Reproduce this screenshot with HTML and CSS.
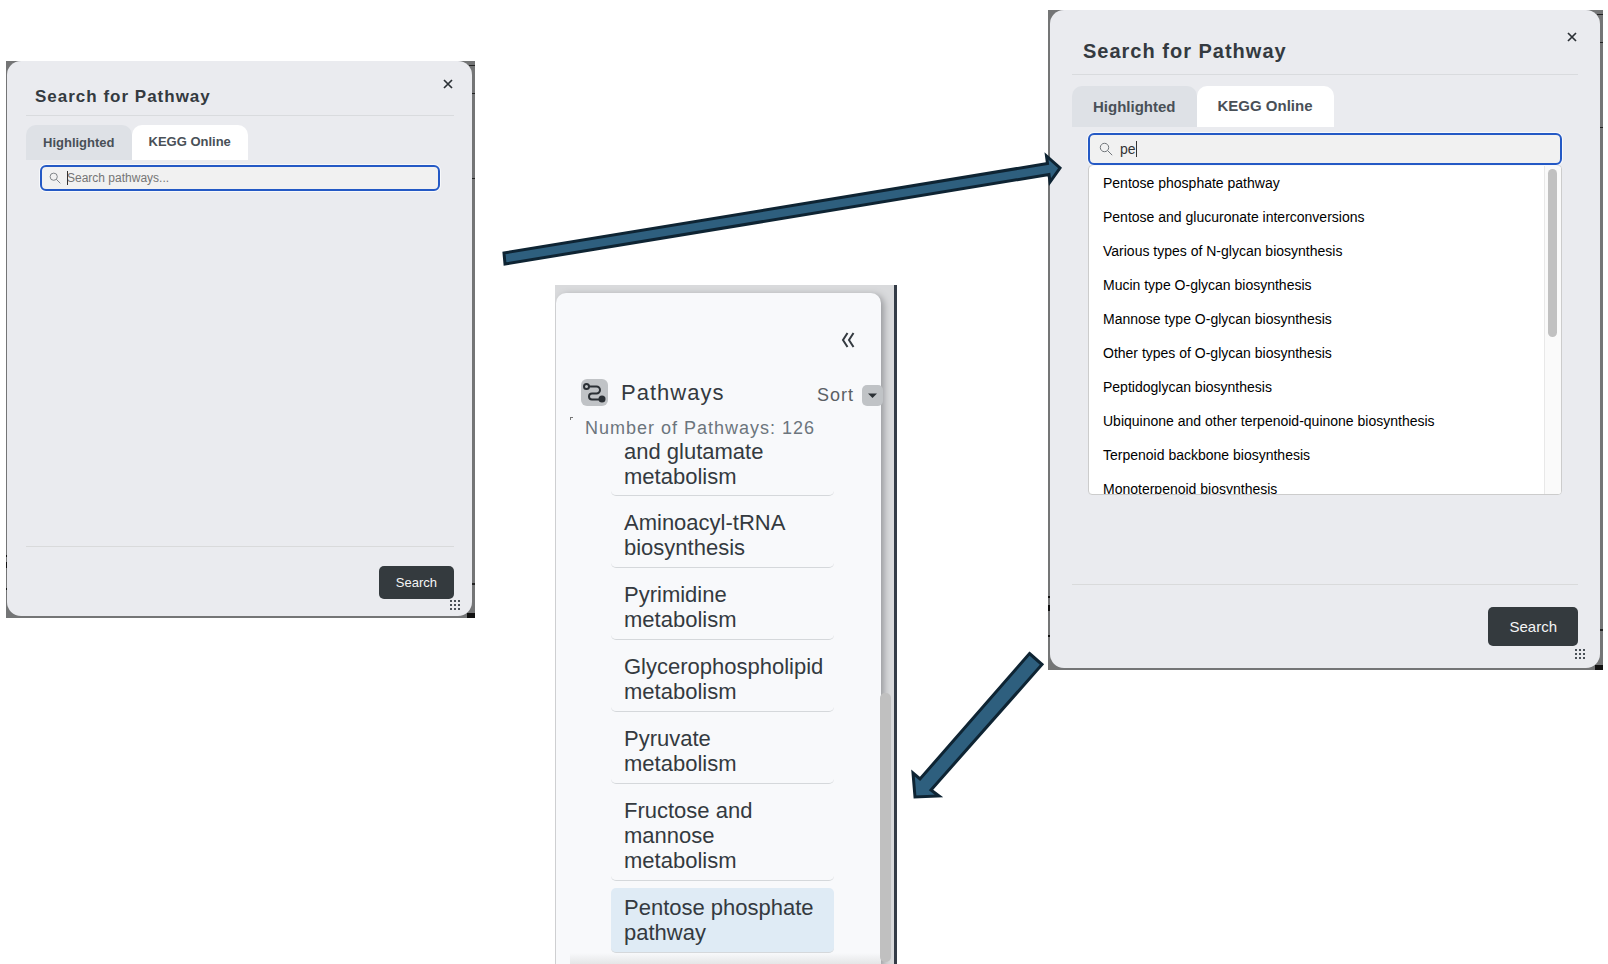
FILE: index.html
```html
<!DOCTYPE html>
<html lang="en">
<head>
<meta charset="utf-8">
<title>Search for Pathway</title>
<link rel="stylesheet" href="styles.css">
</head>
<body>
<main class="board">
  <section class="shot shot-small">
    <div class="dialog">
      <header class="dialog-head">
        <h2 class="dialog-title">Search for Pathway</h2>
        <button class="close" type="button" aria-label="Close"><svg viewBox="0 0 12 12"><path d="M2 2l8 8M10 2l-8 8"/></svg></button>
      </header>
      <div class="dialog-body">
        <div class="tabs">
          <button class="tab" type="button">Highlighted</button>
          <button class="tab tab-active" type="button">KEGG Online</button>
        </div>
        <div class="field">
          <svg class="lens" viewBox="0 0 14 14"><circle cx="5.5" cy="5.5" r="4.2"/><path d="M8.6 8.6l4.6 4.6"/></svg>
          <input class="field-input" type="text" aria-label="Search pathways" placeholder="Search pathways...">
          <span class="caret"></span>
        </div>
      </div>
      <footer class="dialog-foot">
        <button class="submit" type="button">Search</button>
        <svg class="grip" viewBox="0 0 12 12"><path d="M1 2h10M1 6h10M1 10h10"/></svg>
      </footer>
    </div>
  </section>

  <section class="sidebar">
    <div class="card">
      <div class="card-top">
        <button class="collapse" type="button" aria-label="Collapse"><svg viewBox="0 0 14 16"><path d="M6.5 1L2 8l4.500 7M12.500 1L8 8l4.500 7"/></svg></button>
      </div>
      <header class="card-head">
        <svg class="route" viewBox="0 0 27 27"><rect width="27" height="27" rx="6"/><path d="M8 7.500h7.500a3.500 3.500 0 0 1 0 7H11a3 3 0 0 0 0 6h8"/><circle class="ring" cx="5.500" cy="7.500" r="2.500"/><circle class="dot" cx="21" cy="20" r="3.500"/></svg>
        <h2 class="card-title">Pathways</h2>
        <span class="sort">Sort</span>
        <button class="sort-button" type="button" aria-label="Sort options"><svg viewBox="0 0 21 21"><path d="M6 8.500h9L10.500 13z"/></svg></button>
      </header>
      <p class="count">Number of Pathways: 126</p>
      <ul class="items">
        <li class="item item-cut">and glutamate metabolism</li>
        <li class="item">Aminoacyl-tRNA biosynthesis</li>
        <li class="item">Pyrimidine metabolism</li>
        <li class="item">Glycerophospholipid metabolism</li>
        <li class="item">Pyruvate metabolism</li>
        <li class="item">Fructose and mannose metabolism</li>
        <li class="item item-active">Pentose phosphate pathway</li>
      </ul>
      <div class="fade"></div>
    </div>
    <div class="side-thumb"></div>
  </section>

  <section class="shot shot-large">
    <div class="dialog">
      <header class="dialog-head">
        <h2 class="dialog-title">Search for Pathway</h2>
        <button class="close" type="button" aria-label="Close"><svg viewBox="0 0 12 12"><path d="M2 2l8 8M10 2l-8 8"/></svg></button>
      </header>
      <div class="dialog-body">
        <div class="tabs">
          <button class="tab" type="button">Highlighted</button>
          <button class="tab tab-active" type="button">KEGG Online</button>
        </div>
        <div class="field">
          <svg class="lens" viewBox="0 0 14 14"><circle cx="5.5" cy="5.5" r="4.2"/><path d="M8.6 8.6l4.6 4.6"/></svg>
          <input class="field-input" type="text" aria-label="Search pathways" value="pe">
          <span class="caret"></span>
        </div>
        <div class="results">
          <ul class="options">
            <li class="option">Pentose phosphate pathway</li>
            <li class="option">Pentose and glucuronate interconversions</li>
            <li class="option">Various types of N-glycan biosynthesis</li>
            <li class="option">Mucin type O-glycan biosynthesis</li>
            <li class="option">Mannose type O-glycan biosynthesis</li>
            <li class="option">Other types of O-glycan biosynthesis</li>
            <li class="option">Peptidoglycan biosynthesis</li>
            <li class="option">Ubiquinone and other terpenoid-quinone biosynthesis</li>
            <li class="option">Terpenoid backbone biosynthesis</li>
            <li class="option">Monoterpenoid biosynthesis</li>
          </ul>
          <div class="track"><div class="thumb"></div></div>
        </div>
      </div>
      <footer class="dialog-foot">
        <button class="submit" type="button">Search</button>
        <svg class="grip" viewBox="0 0 12 12"><path d="M1 2h10M1 6h10M1 10h10"/></svg>
      </footer>
    </div>
  </section>

  <svg class="arrows" viewBox="0 0 1608 964">
    <path d="M504 253L1047.500 163.500L1046.500 156L1060 168L1050 182L1049 174.500L505 264z"/>
    <path d="M1029.500 653.500L1042 664.500L931 790L939 796L915 797L913 773L920 779z"/>
  </svg>
</main>
</body>
</html>
```
FILE: styles.css
```css
* { box-sizing: border-box; }
body {
  margin: 0;
  background: #fff;
  color: #343a40;
  font-family: "Liberation Sans", Arial, sans-serif;
}
h2, p, ul { margin: 0; padding: 0; }
ul { list-style: none; }
button { border: 0; padding: 0; background: none; font: inherit; color: inherit; }
svg { display: block; fill: none; }

.board {
  position: relative;
  display: grid;
  grid-template-columns: 469fr 80fr 342fr 151fr 555fr;
  align-items: start;
  min-height: 100vh;
  padding: 0 5px 0 6px;
}

/* dialogs */
.shot {
  background:
    linear-gradient(#222, #222) 100% 4px / 6px 1px no-repeat,
    linear-gradient(#222, #222) 100% 32px / 4px 1px no-repeat,
    linear-gradient(#222, #222) 100% 117px / 3px 1px no-repeat,
    linear-gradient(#222, #222) 100% 94% / 3px 2px no-repeat,
    linear-gradient(#111, #111) 0 89% / 2px 2px no-repeat,
    linear-gradient(#111, #111) 0 91% / 2px 6px no-repeat,
    linear-gradient(#111, #111) 0 95% / 2px 2px no-repeat,
    linear-gradient(#111, #111) 100% 100% / 8px 5px no-repeat,
    #747576;
}
.dialog {
  border-radius: 14px;
  background: #eaebef;
}
.dialog-head {
  display: flex;
  justify-content: space-between;
  border-bottom: 1px solid #d9dbde;
}
.dialog-title {
  align-self: flex-end;
  font-weight: 700;
  letter-spacing: 1px;
}
.close { width: 12px; height: 12px; }
.close svg { stroke: #2b3035; stroke-width: 1.7; }
.tabs { display: flex; }
.tab {
  border-radius: 10px 10px 0 0;
  background: #dee1e6;
  color: #495057;
  font-weight: 700;
}
.tab-active { background: #fff; }
.field {
  position: relative;
  display: flex;
  align-items: center;
  border: 2px solid #2459c5;
  border-radius: 6px;
  background: #f1f1f1;
  box-shadow: 0 0 0 1px #f8f9fb;
}
.lens { flex: none; stroke: #70757a; stroke-width: 1; }
.field-input {
  flex: 1;
  min-width: 0;
  border: 0;
  padding: 0;
  outline: 0;
  background: none;
  color: #333;
  font: inherit;
}
.field-input::placeholder { color: #757575; opacity: 1; }
.caret { position: absolute; width: 1px; background: #333; }
.dialog-foot {
  position: relative;
  display: flex;
  justify-content: flex-end;
  border-top: 1px solid #d9dadb;
}
.submit {
  border-radius: 5px;
  background: #343a3e;
  color: #f4f5f6;
}
.grip {
  position: absolute;
  width: 12px;
  height: 12px;
  stroke: #495057;
  stroke-width: 2;
  stroke-dasharray: 2 2;
}

.shot-small { margin-top: 61px; padding: 0 3px 2px 1px; font-size: 13px; }
.shot-small .dialog { padding: 0 18px 0 19px; }
.shot-small .dialog-head { height: 55px; }
.shot-small .dialog-title { padding: 0 0 8px 9px; font-size: 17px; line-height: 20px; }
.shot-small .close { margin-top: 17px; }
.shot-small .dialog-body { min-height: 430px; padding-top: 9px; }
.shot-small .tab { height: 35px; padding: 0 17px; }
.shot-small .field { height: 26px; margin: 5px 14px 0; padding-left: 7px; gap: 6px; font-size: 12px; }
.shot-small .lens { width: 12px; height: 12px; }
.shot-small .caret { left: 25px; top: 4px; height: 14px; }
.shot-small .dialog-foot { padding: 19px 0 17px; }
.shot-small .submit { height: 33px; padding: 0 17px; }
.shot-small .grip { right: -7px; bottom: 5px; }

.shot-large { grid-column: 5; margin-top: 10px; padding: 0 3px 2px 2px; font-size: 15px; }
.shot-large .dialog { padding: 0 22px; }
.shot-large .dialog-head { height: 65px; }
.shot-large .dialog-title { padding: 0 0 11px 11px; font-size: 20px; line-height: 24px; }
.shot-large .close { margin-top: 21px; }
.shot-large .dialog-body { min-height: 509px; padding-top: 11px; }
.shot-large .tab { height: 41px; padding: 0 21px; }
.shot-large .field { height: 32px; margin: 6px 16px 0; padding-left: 9px; gap: 7px; font-size: 14px; }
.shot-large .lens { width: 14px; height: 14px; }
.shot-large .caret { left: 46px; top: 6px; height: 16px; }
.shot-large .dialog-foot { padding: 22px 0; }
.shot-large .submit { height: 39px; padding: 0 21px; }
.shot-large .grip { right: -8px; bottom: 8px; }
.shot .tab-active { padding-bottom: 2px; }

.results {
  display: flex;
  height: 330px;
  margin: 0 16px;
  overflow: hidden;
  border: 1px solid #ccc;
  border-radius: 4px;
  background: #fff;
  color: #000;
  font-size: 14px;
}
.options { flex: 1; padding-left: 14px; }
.option { line-height: 34px; }
.track {
  width: 17px;
  padding: 3px 4px 0 3px;
  border-left: 1px solid #e8e8e8;
  background: #fafafa;
}
.thumb { height: 168px; border-radius: 5px; background: #c1c1c1; }

/* pathway list */
.sidebar {
  position: relative;
  grid-column: 3;
  align-self: stretch;
  display: flex;
  margin-top: 285px;
  padding: 8px 13px 0 1px;
  border-right: 3px solid #343c47;
  background: #d9dadc;
  overflow: hidden;
}
.card {
  position: relative;
  flex: 1;
  min-width: 0;
  border-radius: 10px 10px 0 0;
  background: #f8f9fb;
  box-shadow: 3px 2px 7px #97999c;
}
.card-top { display: flex; justify-content: flex-end; padding: 39px 26px 0 0; }
.collapse { width: 14px; height: 16px; }
.collapse svg { stroke: #343a40; stroke-width: 2; }
.card-head {
  display: flex;
  align-items: center;
  margin-top: 31px;
  padding-left: 25px;
}
.route { width: 27px; height: 27px; stroke: #2b3035; stroke-width: 2; }
.route rect { fill: #c0c3c6; stroke: none; }
.route .dot { fill: #2b3035; stroke: none; }
.card-title {
  flex: 1;
  padding-left: 13px;
  font-size: 22px;
  font-weight: 400;
  line-height: 27px;
  letter-spacing: 1px;
}
.sort { padding: 6px 8px 0 0; color: #5b5f64; font-size: 18px; line-height: 21px; letter-spacing: 1px; }
.sort-button { width: 21px; height: 21px; margin: 6px -2px 0 0; border-radius: 5px; background: #c0c3c6; }
.sort-button path { fill: #2b3035; }
.count {
  position: relative;
  padding: 11px 0 0 29px;
  color: #6c757d;
  font-size: 18px;
  line-height: 22px;
  letter-spacing: 1px;
  white-space: nowrap;
}
.count::before {
  content: "";
  position: absolute;
  left: 14px;
  top: 11px;
  width: 2px;
  height: 2px;
  border: solid #777;
  border-width: 1px 0 0 1px;
}
.items {
  display: flex;
  flex-direction: column;
  gap: 7px;
  padding: 0 47px 12px 55px;
}
.item {
  padding: 7px 9px 7px 13px;
  border-bottom: 1px solid #d5d8db;
  border-radius: 5px;
  font-size: 22px;
  line-height: 25px;
}
.item-cut { padding-top: 0; padding-bottom: 6px; }
.item-active { background: #dfebf5; }
.fade {
  position: absolute;
  right: 0;
  bottom: 0;
  left: 14px;
  height: 12px;
  background: linear-gradient(#e3e4e500, #e3e4e5);
}
.side-thumb {
  position: absolute;
  right: 3px;
  bottom: 3px;
  width: 11px;
  height: 269px;
  border-radius: 5px;
  background: #c0c0c0;
}

.arrows {
  position: absolute;
  top: 0;
  left: 0;
  width: 100%;
  pointer-events: none;
  fill: #2e5f7e;
  stroke: #0e2433;
  stroke-width: 3;
}
```
